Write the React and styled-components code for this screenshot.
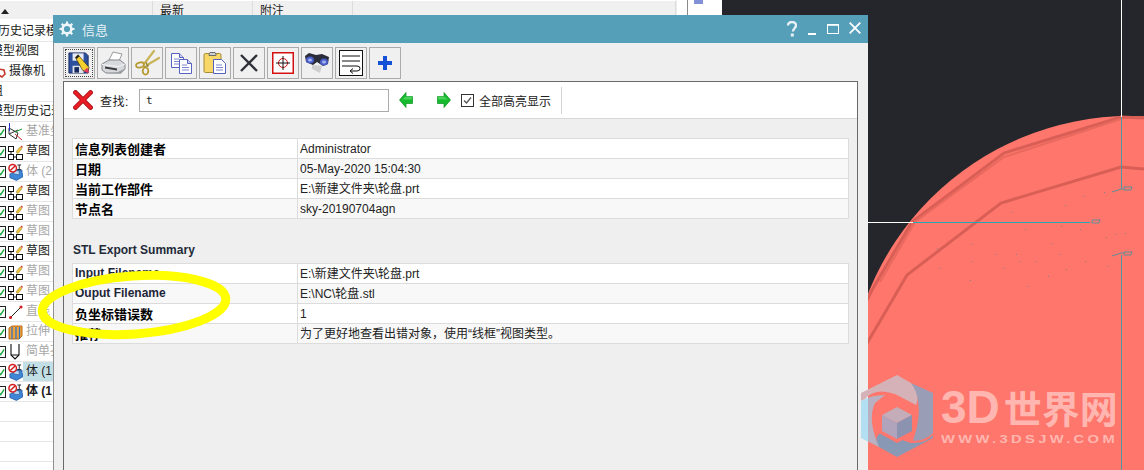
import styled, { createGlobalStyle } from "styled-components";

const GlobalStyle = createGlobalStyle`
  html, body {
    margin: 0;
    padding: 0;
    background: #fff;
  }
  body {
    font-family: "Liberation Sans", "Noto Sans CJK SC", sans-serif;
  }
`;

const Desktop = styled.div`
  position: relative;
  width: 1144px;
  height: 470px;
  overflow: hidden;
  display: flex;
`;

/* navigator panel behind the dialog */
const TreePanel = styled.div`
  width: 677px;
  flex: none;
  box-sizing: border-box;
  border-right: 1px solid #ececec;
  background: #fff;
`;

const TreeHeader = styled.div`
  height: 18px;
  margin-top: 1px;
  display: grid;
  grid-template-columns: 153px 100px 100px 323px;
  background: #f0f0f0;
  font-size: 12px;
  color: #222;
`;

const HeaderCell = styled.div`
  border-right: 1px solid #dcdcdc;
  padding: 3px 0 0 7px;
  line-height: 14px;
  overflow: hidden;
`;

const SortMark = styled.span`
  display: block;
  width: 0;
  height: 0;
  margin: 5px 0 0 -6px;
  border-left: 4px solid transparent;
  border-right: 4px solid transparent;
  border-bottom: 5px solid #222;
`;

const TreeRows = styled.div`
  padding-top: 3px;
`;

const TreeRow = styled.div`
  height: 19px;
  border-bottom: 1px solid #e6e6e6;
  display: flex;
  align-items: center;
  overflow: hidden;
  font-size: 12px;
  white-space: nowrap;
  color: ${(p) => (p.$dim ? "#a8a8a8" : "#1a1a1a")};
  font-weight: ${(p) => (p.$bold ? 700 : 400)};
`;

const ShiftedText = styled.span`
  flex: none;
  display: flex;
  align-items: center;
  margin-left: ${(p) => p.$shift}px;
`;

const Check = styled.span`
  flex: none;
  width: 7px;
  height: 12px;
  margin-left: -1px;
  margin-right: 2px;
  box-sizing: border-box;
  border: 1px solid #222;
  border-left: none;
  background: #fff;
  display: flex;
  align-items: center;
`;

const TreeIcon = styled.span`
  flex: none;
  width: 15px;
  height: 18px;
  display: flex;
  align-items: center;
`;

const TreeLabel = styled.span`
  background: ${(p) => (p.$selected ? "#c3dfe6" : "transparent")};
  padding: 2px 12px 2px 3px;
  line-height: 15px;
`;

const Strip = styled.div`
  width: 45px;
  flex: none;
  background: #fff;
  display: flex;
`;

const StripRule = styled.div`
  width: 1px;
  margin-left: 10px;
  background: #8a8a8a;
`;

const StripIcon = styled.div`
  width: 9px;
  height: 4px;
  margin-left: 6px;
  background: #8191d8;
`;

const Viewport = styled.div`
  flex: 1;
  background: #25262b;
`;

const ViewportArt = styled.svg`
  display: block;
`;

/* floating dialog */
const Dialog = styled.div`
  position: absolute;
  left: 53px;
  top: 15px;
  width: 815px;
  height: 470px;
  background: #efefef;
  box-sizing: border-box;
  border-left: 1px solid #8f8f8f;
`;

const TitleBar = styled.div`
  height: 28px;
  margin-left: -1px;
  background: #559fb9;
  color: #fff;
  display: flex;
  align-items: center;
  padding: 0 7px 0 6px;
  font-size: 13px;
`;

const TitleText = styled.span`
  margin-left: 7px;
  flex: 1;
  color: #e6f1f5;
`;

const WindowButtons = styled.div`
  display: flex;
  align-items: center;
  gap: 10px;
`;

const Body = styled.div`
  padding: 4px 10px 0 9px;
`;

const Toolbar = styled.div`
  display: flex;
  gap: 2px;
  height: 32px;
  margin-bottom: 2px;
`;

const ToolButton = styled.div`
  width: 32px;
  height: 32px;
  box-sizing: border-box;
  border: 1px solid #ababab;
  background: #f0f0f0;
  display: flex;
  align-items: center;
  justify-content: center;
  outline: ${(p) => (p.$focus ? "1px dotted #444" : "none")};
  outline-offset: -3px;
`;

const Frame = styled.div`
  border: 1px solid #696969;
  border-bottom: none;
  height: 400px;
`;

const FindBar = styled.div`
  height: 36px;
  background: #fff;
  border-bottom: 1px solid #d8d8d8;
  display: flex;
  align-items: center;
  font-size: 12px;
  color: #222;
`;

const FindLabel = styled.span`
  margin-left: 7px;
  width: 39px;
  letter-spacing: 0.5px;
`;

const FindInput = styled.div`
  width: 250px;
  height: 23px;
  box-sizing: border-box;
  border: 1px solid #ababab;
  padding-left: 6px;
  line-height: 21px;
  font-family: "DejaVu Sans Mono", monospace;
  font-size: 11px;
`;

const ArrowSlot = styled.span`
  display: flex;
  margin-left: ${(p) => p.$gap}px;
`;

const CheckBox = styled.span`
  width: 13px;
  height: 13px;
  box-sizing: border-box;
  border: 1px solid #333;
  margin-left: 10px;
  margin-right: 5px;
  display: flex;
  align-items: center;
  justify-content: center;
`;

const FindDivider = styled.span`
  width: 1px;
  height: 27px;
  margin-left: 10px;
  background: #d4d4d4;
`;

const Report = styled.div`
  padding: 19px 8px 0 8px;
`;

const InfoTable = styled.div`
  border: 1px solid #dcdcdc;
  border-bottom: none;
  font-size: 12px;
`;

const InfoRow = styled.div`
  height: 19px;
  display: grid;
  grid-template-columns: 225px 1fr;
  background: ${(p) => (p.$alt ? "#f8f8f8" : "#fff")};
  border-bottom: 1px solid #dcdcdc;
  line-height: 21px;
  overflow: hidden;
`;

const InfoKey = styled.div`
  padding-left: 2px;
  font-weight: 700;
  font-size: ${(p) => (p.$latin ? "12px" : "13px")};
  line-height: ${(p) => (p.$latin ? "19px" : "21px")};
  color: ${(p) => (p.$latin ? "#1d2638" : "#000")};
  border-right: 1px solid #dcdcdc;
`;

const InfoValue = styled.div`
  padding-left: 2px;
  color: #222;
  white-space: nowrap;
`;

const SectionTitle = styled.div`
  margin: 22px 0 3px 1px;
  height: 19px;
  line-height: 19px;
  font-size: 12px;
  font-weight: 700;
  color: #222a3a;
`;

/* yellow marker someone drew on the screenshot */
const Marker = styled.svg`
  position: absolute;
  left: 30px;
  top: 262px;
`;

const Watermark = styled.div`
  position: absolute;
  left: 861px;
  top: 375px;
  display: flex;
  align-items: flex-start;
  pointer-events: none;
`;

const WatermarkText = styled.div`
  margin-left: 8px;
  color: #ffb6b0;
`;

const WatermarkName = styled.div`
  font-family: "Noto Sans CJK SC", sans-serif;
  font-size: 38px;
  font-weight: 700;
  line-height: 44px;
  margin-top: 10px;
  white-space: nowrap;
  display: flex;
  align-items: center;
  gap: 4px;
`;

const WatermarkLatin = styled.span`
  font-family: "Liberation Sans", sans-serif;
  font-size: 46px;
`;

const WatermarkUrl = styled.div`
  font-size: 11px;
  font-weight: 700;
  line-height: 12px;
  letter-spacing: 2.5px;
  margin-top: 4px;
  white-space: nowrap;
  transform: scaleX(1.34);
  transform-origin: left;
`;

const SketchIcon = () => (
  <svg width="15" height="16" viewBox="0 0 15 16">
    <rect x=".5" y="2.5" width="5" height="5" fill="#fff" stroke="#111" />
    <rect x=".5" y="10.5" width="5" height="5" fill="#fff" stroke="#111" />
    <rect x="8.5" y="10.5" width="6" height="5" fill="#fff" stroke="#111" />
    <path d="M3 7.5v3M5.5 13h3" stroke="#111" />
    <path d="M8 8l4-5 2 1.500-4 5z" fill="#efc63a" stroke="#9a7414" strokeWidth=".5" />
    <path d="M12.500 2.500l1-1 1.500 1.500-1 1z" fill="#d0402c" />
  </svg>
);

const BodyIcon = () => (
  <svg width="16" height="18" viewBox="0 0 16 18">
    <path d="M2 11l5-2v-3l8 1v3l1 1v3l-7 4-7-3z" fill="#3f86d6" stroke="#1c4f96" strokeWidth=".7" />
    <path d="M6 7l6 1v4l-6-1z" fill="#bcd8f4" stroke="#1c4f96" strokeWidth=".6" />
    <path d="M10 1.500h4M12 1.500v5M10 6.500h4" stroke="#222" />
    <circle cx="5" cy="5" r="4" fill="#fff" stroke="#d31f1f" strokeWidth="1.600" />
    <path d="M2.500 7.500l5-5" stroke="#d31f1f" strokeWidth="1.600" />
  </svg>
);

const DatumIcon = () => (
  <svg width="15" height="18" viewBox="0 0 15 18">
    <path d="M1 5l9 5-2 6-7-5z" fill="none" stroke="#333" />
    <path d="M1 11l9-4" stroke="#333" />
    <path d="M1.500 0v8" stroke="#2030d0" />
    <path d="M7 9l7-3" stroke="#1c9a2c" />
    <path d="M7 11l7 6" stroke="#c82a2a" />
  </svg>
);

const LineIcon = () => (
  <svg width="15" height="16" viewBox="0 0 15 16">
    <path d="M2 14L13 3" stroke="#222" />
    <circle cx="2.500" cy="13.500" r="1.600" fill="#d42020" />
    <circle cx="13" cy="3" r="1.600" fill="#d42020" />
  </svg>
);

const ExtrudeIcon = () => (
  <svg width="15" height="16" viewBox="0 0 15 16">
    <path d="M1 4l3-2h10v10l-3 3H1z" fill="#f0a23a" stroke="#b86a14" />
    <path d="M4 3v12M8 3v12M11.500 3v12" stroke="#2a70c8" strokeWidth="1.200" />
  </svg>
);

const HoleIcon = () => (
  <svg width="14" height="18" viewBox="0 0 14 18">
    <path d="M3 1v11l4 4 4-4V1" fill="none" stroke="#111" strokeWidth="1.100" />
    <path d="M3 12h8" stroke="#111" />
  </svg>
);

const CameraMark = () => (
  <svg width="8" height="14" viewBox="0 0 8 14">
    <path d="M1 4l5 1 1 4-3 3-3-2z" fill="#fff" stroke="#c43a2a" strokeWidth="1.600" />
  </svg>
);

const treeIcons = {
  sketch: SketchIcon,
  body: BodyIcon,
  datum: DatumIcon,
  line: LineIcon,
  extrude: ExtrudeIcon,
  hole: HoleIcon,
};

const plainRows = [
  { text: "历史记录模式", shift: -5 },
  { text: "模型视图", shift: -12 },
  { text: "摄像机", shift: -2, camera: true },
  { text: "组", shift: -12 },
  { text: "模型历史记录", shift: -12 },
];

const featureRows = [
  { icon: "datum", text: "基准坐标系", dim: true },
  { icon: "sketch", text: "草图" },
  { icon: "body", text: "体 (2", dim: true },
  { icon: "sketch", text: "草图" },
  { icon: "sketch", text: "草图", dim: true },
  { icon: "sketch", text: "草图", dim: true },
  { icon: "sketch", text: "草图" },
  { icon: "sketch", text: "草图", dim: true },
  { icon: "sketch", text: "草图", dim: true },
  { icon: "line", text: "直线", dim: true },
  { icon: "extrude", text: "拉伸", dim: true },
  { icon: "hole", text: "简单孔", dim: true },
  { icon: "body", text: "体 (1", selected: true },
  { icon: "body", text: "体 (1", bold: true },
];

const SaveIcon = () => (
  <svg width="22" height="22" viewBox="0 0 24 24">
    <path d="M1 1h18l3 3v19H1z" fill="#2c4f9e" stroke="#16285c" />
    <rect x="5" y="1.500" width="12" height="8" fill="#e8ecf6" />
    <rect x="5" y="15" width="12" height="8" fill="#dfe3ea" />
    <rect x="7" y="16.500" width="5" height="6" fill="#16285c" />
    <path d="M8 6l3-3 12 14-2 5-5-2z" fill="#f5cf2e" stroke="#3a2a08" strokeWidth=".7" />
    <path d="M17 21l4-4 2 5-1 1z" fill="#e23a5a" />
    <path d="M8 6l3-3 1.500 1.500-3 3z" fill="#222" />
  </svg>
);

const PrinterIcon = () => (
  <svg width="26" height="24" viewBox="0 0 26 24">
    <path d="M9 9l4-8 9 2-3 7z" fill="#fff" stroke="#9a9a9a" />
    <path d="M2 13l7-4h11l5 4v5l-4 4H6l-4-3z" fill="#d6d8dc" stroke="#85888e" />
    <path d="M2 13.500l16 2 7-2.500" fill="none" stroke="#f4f5f6" />
    <path d="M5 15.500l12 2v2l-12-2z" fill="#3a3c42" />
    <path d="M17 21.500l8-4v1l-4 4H6z" fill="#9a9da2" />
  </svg>
);

const ScissorsIcon = () => (
  <svg width="26" height="26" viewBox="0 0 26 26">
    <path d="M10 14L20 1" stroke="#c9b458" strokeWidth="2.200" strokeLinecap="round" />
    <path d="M13 15L25 8" stroke="#c9b458" strokeWidth="2.200" strokeLinecap="round" />
    <path d="M10 17l5-2M12 12l2 5" stroke="#8c7a2c" />
    <ellipse cx="6" cy="15" rx="4" ry="2.500" fill="none" stroke="#b69a34" strokeWidth="1.800" transform="rotate(-15 6 15)" />
    <ellipse cx="11.500" cy="21" rx="2.800" ry="3.600" fill="none" stroke="#b69a34" strokeWidth="1.800" />
  </svg>
);

const DocShape = ({ x, y }) => (
  <g transform={`translate(${x} ${y})`}>
    <path d="M.5.5h8l4 4v10H.5z" fill="#fff" stroke="#5662c0" />
    <path d="M8.500.5v4h4" fill="#c9cef0" stroke="#5662c0" />
    <path d="M3 6h5M3 8.500h7M3 11h7" stroke="#7c86d0" />
  </g>
);

const CopyIcon = () => (
  <svg width="24" height="24" viewBox="0 0 24 24">
    <DocShape x={2} y={2} />
    <DocShape x={10} y={8} />
  </svg>
);

const PasteIcon = () => (
  <svg width="26" height="26" viewBox="0 0 26 26">
    <rect x="2" y="3.500" width="17" height="19" rx="1.500" fill="#f6d768" stroke="#a58b34" />
    <path d="M7 4.500l1-2h5l1 2v1H7z" fill="#cfcfcf" stroke="#6a6a6a" />
    <path d="M11.500 9.500h8l4 4v10h-12z" fill="#fff" stroke="#5662c0" />
    <path d="M14 15h6M14 17.500h7M14 20h7" stroke="#7c86d0" />
  </svg>
);

const DeleteIcon = () => (
  <svg width="20" height="20" viewBox="0 0 20 20">
    <path d="M2 2l16 16M18 2L2 18" stroke="#30323a" strokeWidth="2.400" />
  </svg>
);

const TargetIcon = () => (
  <svg width="22" height="22" viewBox="0 0 22 22">
    <rect x=".75" y=".75" width="20.500" height="20.500" fill="#fff" stroke="#d40f0f" strokeWidth="1.500" />
    <circle cx="11" cy="11" r="4.500" fill="none" stroke="#d40f0f" />
    <path d="M11 4v14M4 11h14" stroke="#111" />
  </svg>
);

const BinocularsIcon = () => (
  <svg width="26" height="22" viewBox="0 0 26 22">
    <path d="M8 13l10 1-2 7-8-4z" fill="#cfcfcf" />
    <path d="M1 4l4-3 7 2 6-1 7 3-1 7-5 2-6-4-4 3-7-3z" fill="#2a2c3a" />
    <ellipse cx="6" cy="8" rx="4" ry="3.500" fill="#4a5fc8" />
    <ellipse cx="20" cy="10" rx="4" ry="3.500" fill="#4a5fc8" />
    <ellipse cx="6" cy="8" rx="2" ry="1.500" fill="#a6b4f2" />
    <ellipse cx="20" cy="10" rx="2" ry="1.500" fill="#a6b4f2" />
  </svg>
);

const WrapIcon = () => (
  <svg width="24" height="26" viewBox="0 0 24 26">
    <rect x=".5" y=".5" width="23" height="25" fill="#fff" stroke="#111" />
    <path d="M3 6h18M3 11h18M3 16h15q3 0 3 2.500T18 21h-6" fill="none" stroke="#111" />
    <path d="M14 18.500l-3 2.500 3 2.500" fill="none" stroke="#111" />
  </svg>
);

const PlusIcon = () => (
  <svg width="16" height="16" viewBox="0 0 16 16">
    <path d="M6 1h4v5h5v4h-5v5H6v-5H1V6h5z" fill="#1550d8" />
  </svg>
);

const toolIcons = [
  SaveIcon,
  PrinterIcon,
  ScissorsIcon,
  CopyIcon,
  PasteIcon,
  DeleteIcon,
  TargetIcon,
  BinocularsIcon,
  WrapIcon,
  PlusIcon,
];

const GearIcon = () => (
  <svg width="16" height="16" viewBox="0 0 16 16">
    <circle cx="8" cy="8" r="4.400" fill="none" stroke="#eef6f9" strokeWidth="2.600" />
    <path
      d="M8 .5v3M8 12.500v3M.5 8h3M12.500 8h3M2.700 2.700l2 2M11.300 11.300l2 2M13.300 2.700l-2 2M4.700 11.300l-2 2"
      stroke="#eef6f9"
      strokeWidth="2.200"
    />
  </svg>
);

const WindowControls = () => (
  <WindowButtons>
    <svg width="10" height="16" viewBox="0 0 10 16">
      <path
        d="M1 4.500C1 2.300 2.600 1 5 1s4 1.300 4 3.300c0 3-3 3-3 6.200"
        fill="none"
        stroke="#e8f2f6"
        strokeWidth="2.400"
      />
      <rect x="3.800" y="12.500" width="3" height="3" fill="#e8f2f6" />
    </svg>
    <svg width="10" height="16" viewBox="0 0 10 16">
      <rect x="1" y="12" width="8" height="2" fill="#fff" />
    </svg>
    <svg width="12" height="16" viewBox="0 0 12 16">
      <rect x=".5" y="3.500" width="11" height="9" fill="none" stroke="#fff" />
      <rect x="0" y="3" width="12" height="1.800" fill="#fff" />
    </svg>
    <svg width="12" height="12" viewBox="0 0 12 12" style={{ marginTop: -3 }}>
      <path d="M.7.7l10.600 10.600M11.300.7L.7 11.300" stroke="#fff" strokeWidth="1.800" />
    </svg>
  </WindowButtons>
);

const Arrow = ({ flip }) => (
  <svg width="14" height="16" viewBox="0 0 14 16" style={flip ? { transform: "scaleX(-1)" } : undefined}>
    <path d="M7 .5L.5 8 7 15.500V11.500h6.500v-7H7z" fill="#14bb2c" stroke="#0a8f20" strokeWidth=".7" />
    <path d="M7 4.500h6v3H3z" fill="#5fdc6e" opacity=".7" />
  </svg>
);

const CloseCross = () => (
  <svg width="20" height="20" viewBox="0 0 20 20" style={{ marginLeft: 9 }}>
    <path d="M2.500 2.500l15 15M17.500 2.500l-15 15" stroke="#a8141a" strokeWidth="4.600" strokeLinecap="square" />
    <path d="M2.500 2.500l15 15M17.500 2.500l-15 15" stroke="#ea1c24" strokeWidth="3" strokeLinecap="square" />
  </svg>
);

const generalInfo = [
  ["信息列表创建者", "Administrator"],
  ["日期", "05-May-2020 15:04:30"],
  ["当前工作部件", "E:\\新建文件夹\\轮盘.prt"],
  ["节点名", "sky-20190704agn"],
];

const stlInfo = [
  ["Input Filename", "E:\\新建文件夹\\轮盘.prt", true],
  ["Ouput Filename", "E:\\NC\\轮盘.stl", true],
  ["负坐标错误数", "1"],
  ["推荐", "为了更好地查看出错对象，使用“线框”视图类型。"],
];

const specks = [
  [1012, 212], [1065, 205], [1084, 196], [1104, 192], [1025, 229], [1061, 226], [1106, 237],
  [937, 248], [971, 244], [1016, 254], [1052, 243], [1080, 229], [1116, 234], [1020, 261],
  [995, 254], [972, 261], [1036, 261], [1059, 254], [1085, 261], [1125, 233], [939, 268],
  [1003, 268], [1066, 269], [1107, 266], [1048, 276], [970, 280], [1027, 286],
];

const ViewportDrawing = () => (
  <ViewportArt width="422" height="470" viewBox="722 0 422 470">
    <circle cx="1130" cy="398" r="282" fill="#fe766c" />
    <path
      d="M845 345L872 290 912 222 1004 153 1121 117 1144 118"
      fill="none"
      stroke="#d95f56"
      strokeWidth="3"
    />
    <path
      d="M880 282L915 222 1004 157 1121 119"
      fill="none"
      stroke="#e9695f"
      strokeWidth="2"
    />
    <path
      d="M866 345L907 275 1001 203 1121 167 1144 169"
      fill="none"
      stroke="#d95f56"
      strokeWidth="3"
    />
    <path d="M1121.500 0V117" stroke="#fff" />
    <path d="M1121.500 117V189" stroke="#4f97a4" />
    <path d="M1121.500 255V470" stroke="#4f97a4" />
    <path d="M722 222.500H913" stroke="#fff" />
    <path d="M913 222.500H1090" stroke="#22a9b5" />
    <path d="M1112 192l9-3h3M1112 256l9-3h3" stroke="#5f8f98" fill="none" />
    <path d="M1124 187h8l-1 3h-7zM1124 252h8l-1 3h-7zM1092 220h8l-1 3h-7z" fill="none" stroke="#5f8f98" />
    {specks.map(([x, y]) => (
      <rect key={`${x}-${y}`} x={x} y={y} width="1" height="1" fill="#8c7f86" />
    ))}
  </ViewportArt>
);

const LogoMark = () => (
  <svg width="72" height="84" viewBox="0 0 72 84">
    <path d="M0 18L36 0 50 8Q60 18 55 30L34 19Q14 12 4 24L0 26z" fill="#d4b2b8" />
    <path d="M50 8L72 18V58Q66 65 52 66Q60 42 57 26Q56 16 50 8z" fill="#9a9db6" />
    <path d="M72 60V63L36 82 18 72Q12 62 20 58L50 68Q64 69 72 60z" fill="#8899b6" />
    <path d="M0 26Q10 20 24 20L14 28Q6 44 18 72L0 63z" fill="#8ed5f5" opacity=".62" />
    <path d="M36 28L54 38V58L36 68 18 58V38z" fill="#fe766c" />
    <path d="M36 32L51 40 36 48 21 40z" fill="#c4acb8" />
    <path d="M21 40L36 48V64L21 56z" fill="#b0a4bc" />
    <path d="M51 40L36 48V64L51 56z" fill="#8c93b0" />
  </svg>
);

const InfoSection = ({ rows }) => (
  <InfoTable>
    {rows.map(([key, value, latin], i) => (
      <InfoRow key={key} $alt={i % 2 === 1}>
        <InfoKey $latin={latin}>{key}</InfoKey>
        <InfoValue>{value}</InfoValue>
      </InfoRow>
    ))}
  </InfoTable>
);

const App = () => {
  return (
    <>
      <GlobalStyle />
      <Desktop>
        <TreePanel>
          <TreeHeader>
            <HeaderCell>
              <SortMark />
            </HeaderCell>
            <HeaderCell>最新</HeaderCell>
            <HeaderCell>附注</HeaderCell>
            <HeaderCell />
          </TreeHeader>
          <TreeRows>
            {plainRows.map((row) => (
              <TreeRow key={row.text}>
                <ShiftedText $shift={row.shift}>
                  {row.camera && <CameraMark />}
                  <TreeLabel>{row.text}</TreeLabel>
                </ShiftedText>
              </TreeRow>
            ))}
            {featureRows.map((row, i) => {
              const Icon = treeIcons[row.icon];
              return (
                <TreeRow key={i} $dim={row.dim} $bold={row.bold}>
                  <Check>
                    <svg width="7" height="10" viewBox="0 0 7 10">
                      <path d="M0 6l2 2 4-6" fill="none" stroke="#14a83c" strokeWidth="1.600" />
                    </svg>
                  </Check>
                  <TreeIcon>
                    <Icon />
                  </TreeIcon>
                  <TreeLabel $selected={row.selected}>{row.text}</TreeLabel>
                </TreeRow>
              );
            })}
            <TreeRow />
            <TreeRow />
            <TreeRow />
            <TreeRow />
          </TreeRows>
        </TreePanel>
        <Strip>
          <StripRule />
          <StripIcon />
        </Strip>
        <Viewport>
          <ViewportDrawing />
        </Viewport>

        <Dialog>
          <TitleBar>
            <GearIcon />
            <TitleText>信息</TitleText>
            <WindowControls />
          </TitleBar>
          <Body>
            <Toolbar>
              {toolIcons.map((Icon, i) => (
                <ToolButton key={i} $focus={i === 0}>
                  <Icon />
                </ToolButton>
              ))}
            </Toolbar>
            <Frame>
              <FindBar>
                <CloseCross />
                <FindLabel>查找:</FindLabel>
                <FindInput>t</FindInput>
                <ArrowSlot $gap={10}>
                  <Arrow />
                </ArrowSlot>
                <ArrowSlot $gap={24}>
                  <Arrow flip />
                </ArrowSlot>
                <CheckBox>
                  <svg width="11" height="11" viewBox="0 0 11 11">
                    <path d="M2 5.500l2.500 2.500L9 2.500" fill="none" stroke="#555" strokeWidth="1.300" />
                  </svg>
                </CheckBox>
                全部高亮显示
                <FindDivider />
              </FindBar>
              <Report>
                <InfoSection rows={generalInfo} />
                <SectionTitle>STL Export Summary</SectionTitle>
                <InfoSection rows={stlInfo} />
              </Report>
            </Frame>
          </Body>
        </Dialog>

        <Marker width="210" height="86" viewBox="0 0 210 86">
          <ellipse
            cx="104"
            cy="43"
            rx="92"
            ry="29"
            fill="none"
            stroke="#ffff00"
            strokeWidth="9"
            transform="rotate(-4 104 43)"
          />
        </Marker>

        <Watermark>
          <LogoMark />
          <WatermarkText>
            <WatermarkName>
              <WatermarkLatin>3D</WatermarkLatin>世界网
            </WatermarkName>
            <WatermarkUrl>WWW.3DSJW.COM</WatermarkUrl>
          </WatermarkText>
        </Watermark>
      </Desktop>
    </>
  );
};

export default App;
